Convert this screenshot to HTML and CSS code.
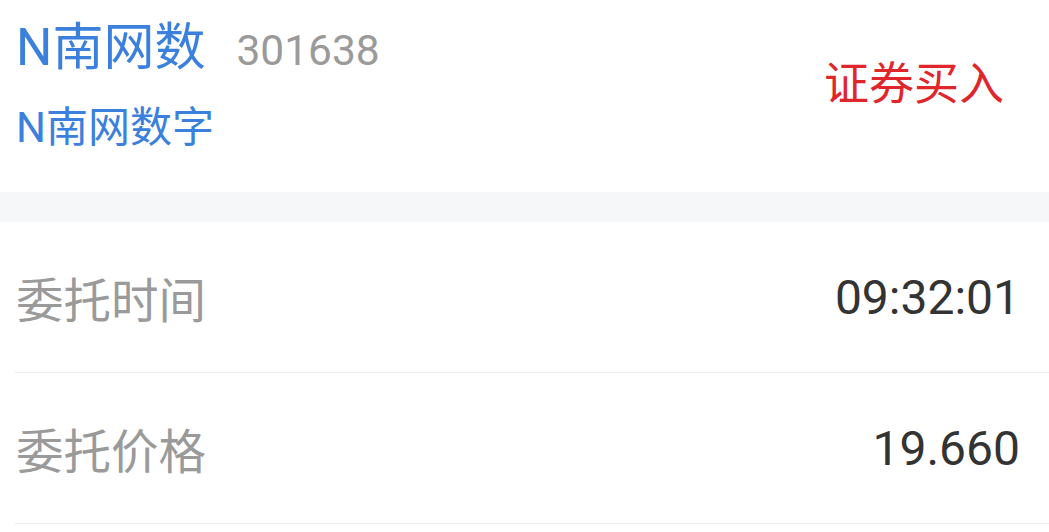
FILE: index.html
```html
<!DOCTYPE html>
<html lang="zh-CN">
<head>
<meta charset="utf-8">
<title>委托详情</title>
<link rel="stylesheet" href="styles.css">
</head>
<body>
<div class="page">
  <header class="head">
    <div class="stock">
      <div class="title-line">
        <span class="stock-name">N南网数</span>
        <span class="stock-code">301638</span>
      </div>
      <div class="stock-full">N南网数字</div>
    </div>
    <div class="trade-type">证券买入</div>
  </header>
  <div class="band"></div>
  <ul class="rows">
    <li class="row"><span class="label">委托时间</span><span class="value">09:32:01</span></li>
    <li class="row"><span class="label">委托价格</span><span class="value">19.660</span></li>
  </ul>
</div>
</body>
</html>
```

FILE: styles.css
```css
html, body {
  margin: 0;
  padding: 0;
  background: #ffffff;
}
body {
  font-family: Roboto, "Noto Sans CJK SC", "Noto Sans", sans-serif;
  width: 1049px;
  height: 532px;
  overflow: hidden;
}
.page {
  display: flex;
  flex-direction: column;
}
.head {
  height: 192px;
  box-sizing: border-box;
  padding: 14px 45px 36px 16px;
  display: flex;
  align-items: center;
  justify-content: space-between;
}
.stock {
  display: flex;
  flex-direction: column;
  align-self: stretch;
}
.title-line {
  display: flex;
  align-items: baseline;
  gap: 31px;
  height: 68px;
  line-height: 68px;
}
.stock-name {
  color: #3a80dc;
  font-size: 51px;
}
.stock-code {
  color: #9a9a9a;
  font-size: 42.5px;
}
.stock-full {
  margin-top: 18px;
  color: #3a80dc;
  font-size: 42px;
  line-height: 56px;
}
.trade-type {
  color: #e0262b;
  font-size: 45px;
  line-height: 56px;
}
.band {
  height: 30px;
  background: #f6f7f9;
}
.rows {
  list-style: none;
  margin: 0;
  padding: 0;
}
.row {
  margin-left: 15px;
  height: 151px;
  box-sizing: border-box;
  border-bottom: 1px solid #ececec;
  padding: 0 29px 0 1px;
  display: flex;
  align-items: center;
  justify-content: space-between;
}
.label {
  color: #9a9a9a;
  font-size: 47.5px;
}
.value {
  color: #333333;
  font-size: 48px;
}
```
